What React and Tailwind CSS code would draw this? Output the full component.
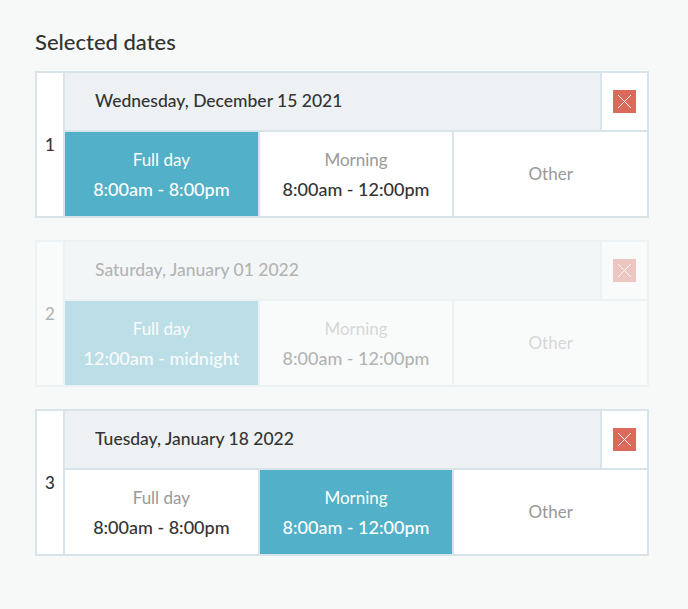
import React from 'react';

const dates = [
  {
    n: 1,
    label: 'Wednesday, December 15 2021',
    selected: 0,
    fullDay: '8:00am - 8:00pm',
    disabled: false,
  },
  {
    n: 2,
    label: 'Saturday, January 01 2022',
    selected: 0,
    fullDay: '12:00am - midnight',
    disabled: true,
  },
  {
    n: 3,
    label: 'Tuesday, January 18 2022',
    selected: 1,
    fullDay: '8:00am - 8:00pm',
    disabled: false,
  },
];

const Option = ({ title, time, active, last }) => (
  <div
    className={`flex-1 flex flex-col items-center justify-center ${
      last ? '' : 'border-r-2 border-[#d8e4e9]'
    } ${active ? 'bg-[#52b0c8]' : 'bg-white'}`}
  >
    <span className={`text-[17px] leading-[20px] ${active ? 'text-white' : 'text-[#999]'}`}>
      {title}
    </span>
    {time && (
      <span
        className={`text-[18px] leading-[20px] mt-[9px] font-medium ${
          active ? 'text-white' : 'text-[#333]'
        }`}
      >
        {time}
      </span>
    )}
  </div>
);

const DateCard = ({ d }) => (
  <div
    className={`flex border-2 border-[#d8e4e9] bg-white ${
      d.disabled ? 'opacity-35' : ''
    }`}
  >
    <div className="w-[28px] flex items-center justify-center text-[17px] font-medium text-[#333] border-r-2 border-[#d8e4e9]">
      {d.n}
    </div>
    <div className="flex-1 flex flex-col">
      <div className="h-[59px] flex border-b-2 border-[#d8e4e9]">
        <div className="flex-1 bg-[#edf1f3] flex items-center pl-[30px] text-[17.5px] font-medium text-[#333]">
          {d.label}
        </div>
        <div className="w-[47px] border-l-2 border-[#d8e4e9] bg-white flex items-center justify-center">
          <div className="w-[23px] h-[23px] bg-[#dc6a5a] flex items-center justify-center">
            <svg width="15" height="15" viewBox="0 0 15 15">
              <path d="M1 1 L14 14 M14 1 L1 14" stroke="#fff" strokeWidth="1" />
            </svg>
          </div>
        </div>
      </div>
      <div className="h-[84px] flex">
        <Option title="Full day" time={d.fullDay} active={d.selected === 0} />
        <Option title="Morning" time="8:00am - 12:00pm" active={d.selected === 1} />
        <Option title="Other" last />
      </div>
    </div>
  </div>
);

export default function App() {
  return (
    <div
      className="min-h-screen bg-[#f7f9f9] px-[35px] pt-[28px]"
      style={{ fontFamily: 'Lato, "Open Sans", sans-serif' }}
    >
      <h2 className="text-[22px] leading-[28px] font-medium text-[#333] mb-[15px]">Selected dates</h2>
      <div className="w-[614px] flex flex-col gap-[22px]">
        {dates.map((d) => (
          <DateCard key={d.n} d={d} />
        ))}
      </div>
    </div>
  );
}
